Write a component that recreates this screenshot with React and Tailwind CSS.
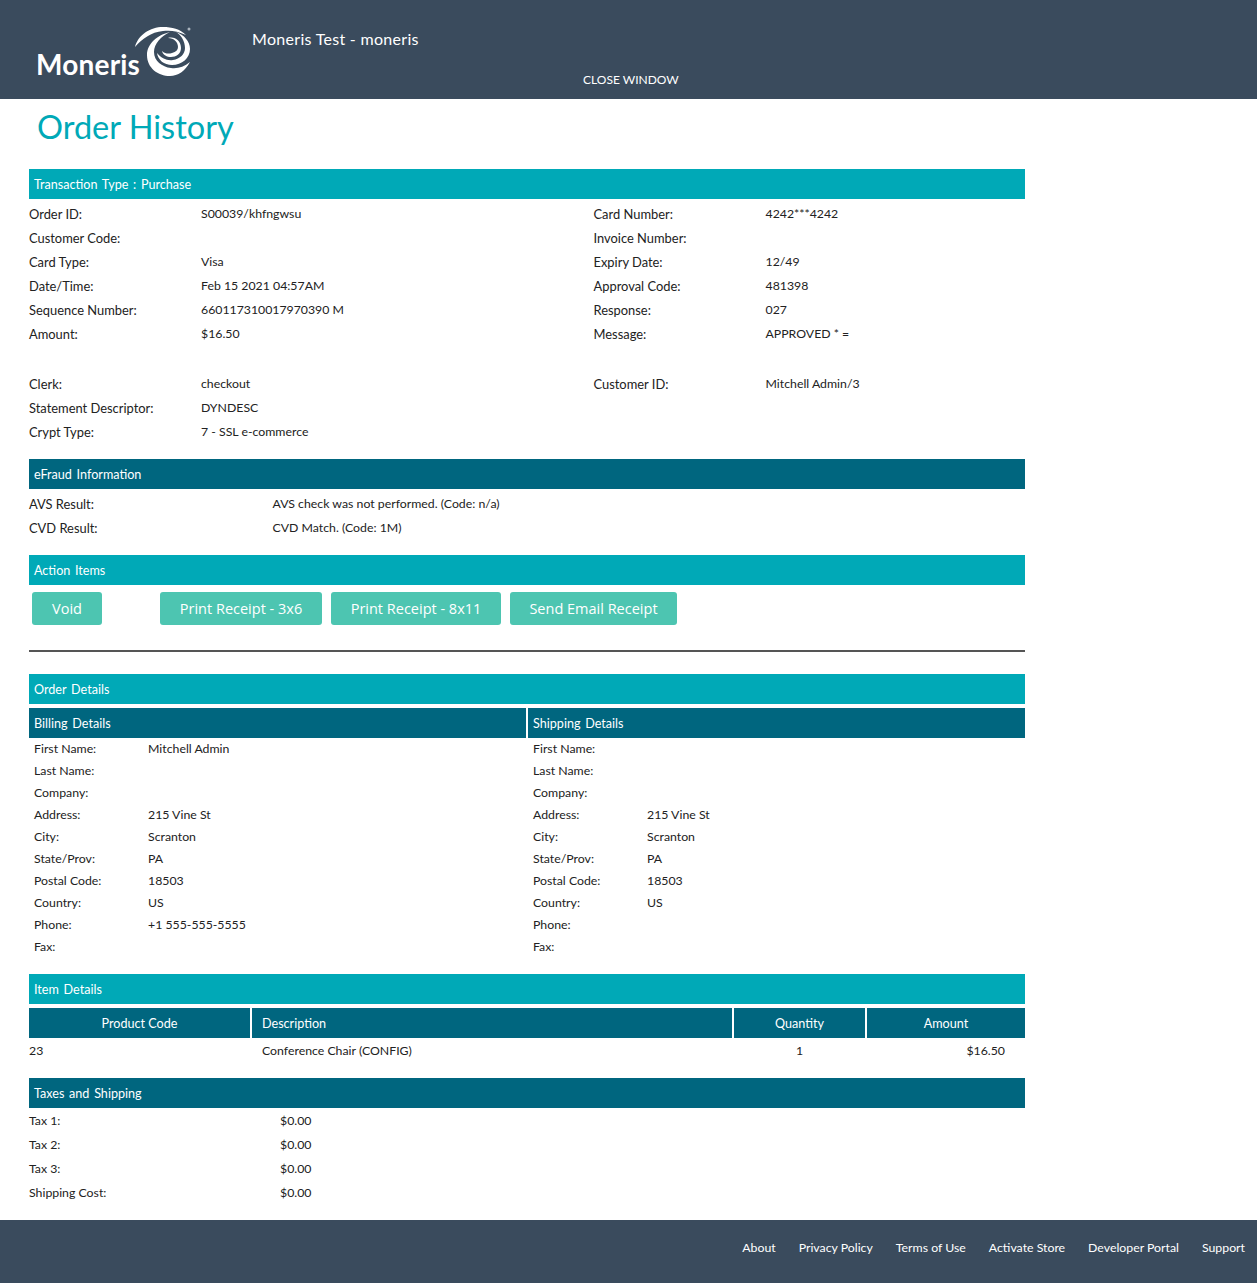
const SANS = "font-['Lato','Open_Sans',sans-serif]";

const mainRows = [
  ['Order ID:', 'S00039/khfngwsu', 'Card Number:', '4242***4242'],
  ['Customer Code:', '', 'Invoice Number:', ''],
  ['Card Type:', 'Visa', 'Expiry Date:', '12/49'],
  ['Date/Time:', 'Feb 15 2021 04:57AM', 'Approval Code:', '481398'],
  ['Sequence Number:', '660117310017970390 M', 'Response:', '027'],
  ['Amount:', '$16.50', 'Message:', 'APPROVED * ='],
];

const extraRows = [
  ['Clerk:', 'checkout', 'Customer ID:', 'Mitchell Admin/3'],
  ['Statement Descriptor:', 'DYNDESC', '', ''],
  ['Crypt Type:', '7 - SSL e-commerce', '', ''],
];

const billing = [
  ['First Name:', 'Mitchell Admin'],
  ['Last Name:', ''],
  ['Company:', ''],
  ['Address:', '215 Vine St'],
  ['City:', 'Scranton'],
  ['State/Prov:', 'PA'],
  ['Postal Code:', '18503'],
  ['Country:', 'US'],
  ['Phone:', '+1 555-555-5555'],
  ['Fax:', ''],
];

const shipping = [
  ['First Name:', ''],
  ['Last Name:', ''],
  ['Company:', ''],
  ['Address:', '215 Vine St'],
  ['City:', 'Scranton'],
  ['State/Prov:', 'PA'],
  ['Postal Code:', '18503'],
  ['Country:', 'US'],
  ['Phone:', ''],
  ['Fax:', ''],
];

const taxes = ['Tax 1:', 'Tax 2:', 'Tax 3:', 'Shipping Cost:'];
const footerLinks = ['About', 'Privacy Policy', 'Terms of Use', 'Activate Store', 'Developer Portal', 'Support'];

function Bar({ dark, children, className = '' }) {
  return (
    <div className={`h-[30px] flex items-center pt-[2px] px-[5px] text-white text-[12.6px] [word-spacing:1.5px] ${dark ? 'bg-[#00667f]' : 'bg-[#00a9b7]'} ${className}`}>
      {children}
    </div>
  );
}

function Row({ r }) {
  return (
    <div className="h-[24px] flex items-center pt-[1px]">
      <div className="w-[172px] text-[12.9px]">{r[0]}</div>
      <div className="w-[392.5px]">{r[1]}</div>
      <div className="w-[172px] text-[12.9px]">{r[2]}</div>
      <div>{r[3]}</div>
    </div>
  );
}

function Logo() {
  return (
    <div className="flex items-end h-[56px]">
      <span className="w-[94px] whitespace-nowrap text-white text-[28px] leading-none font-bold tracking-[0.2px] font-['Lato',sans-serif] mb-[2px]">Moneris</span>
      <svg viewBox="0 0 66 62" className="w-[66px] h-[62px] shrink-0 -mb-[2px]" fill="#fff">
        <path d="M5 27C8 15 20 7 33 7c9 0 17 2 23 8-8-4-16-5-23-4C21 12 12 19 5 27z" />
        <path d="M40 12C27 15 17 24 17 35c0 13 11 21 23 21 8 0 15-5 20-14-6 5-13 7-19 6-9-1-17-7-17-16 0-8 7-16 16-20z" />
        <path d="M46 12c8 3 14 9 14 17 0 9-8 16-18 16-8 0-14-5-15-12 4 5 10 8 16 7 7-1 12-6 12-12 0-7-4-13-9-16z" />
        <path d="M38 18c7-2 13 3 13 10 0 6-5 9-10 9-4 0-8-2-9-6 3 3 7 3 10 2 4-1 6-3 6-6 0-5-4-9-10-9z" />
        <circle cx="59" cy="9" r="1.5" fill="#aab4be" />
      </svg>
    </div>
  );
}

export default function App() {
  return (
    <div className={`min-h-[1283px] bg-white text-[12.3px] text-[#222] flex flex-col ${SANS}`}>
      {/* Header */}
      <div className="h-[99px] bg-[#3a4b5d] text-white flex pl-[36px]">
        <div className="pt-[24px] w-[160px]">
          <Logo />
        </div>
        <div className="ml-[56px] w-[520px]">
          <div className="mt-[28px] text-[16px] leading-[22px] tracking-[0.3px]">Moneris Test - moneris</div>
          <div className="mt-[20px] ml-[331px] text-[12px] leading-[20px]">CLOSE WINDOW</div>
        </div>
      </div>

      <div className="ml-[29px] w-[996px]">
        <h1 className="ml-[8px] mt-[7px] mb-[21px] text-[32.5px] leading-[42px] text-[#00a9b7]">Order History</h1>

        <Bar>Transaction Type : Purchase</Bar>
        <div className="pt-[3px]">
          {mainRows.map((r, i) => (
            <Row key={i} r={r} />
          ))}
          <div className="h-[26px]"></div>
          {extraRows.map((r, i) => (
            <Row key={i} r={r} />
          ))}
        </div>

        <Bar dark className="mt-[15px]">eFraud Information</Bar>
        <div className="pt-[3px]">
          <div className="h-[24px] flex items-center pt-[1px]">
            <div className="w-[243.5px] text-[12.9px]">AVS Result:</div>
            <div>AVS check was not performed. (Code: n/a)</div>
          </div>
          <div className="h-[24px] flex items-center pt-[1px]">
            <div className="w-[243.5px] text-[12.9px]">CVD Result:</div>
            <div>CVD Match. (Code: 1M)</div>
          </div>
        </div>

        <Bar className="mt-[15px]">Action Items</Bar>
        <div className="flex mt-[7px] pl-[3px] font-['Open_Sans',sans-serif] text-[14.5px] text-white">
          <button className="h-[33px] w-[70px] rounded-[3px] bg-[#4dc5b1]">Void</button>
          <button className="h-[33px] w-[162px] ml-[58px] rounded-[3px] bg-[#4dc5b1]">Print Receipt - 3x6</button>
          <button className="h-[33px] w-[170px] ml-[9px] rounded-[3px] bg-[#4dc5b1]">Print Receipt - 8x11</button>
          <button className="h-[33px] w-[167px] ml-[9px] rounded-[3px] bg-[#4dc5b1]">Send Email Receipt</button>
        </div>
        <div className="h-[2px] bg-[#555] mt-[25px] mb-[22px]"></div>

        <Bar>Order Details</Bar>
        <div className="grid grid-cols-2 gap-x-[2px] mt-[4px]">
          {[['Billing Details', billing], ['Shipping Details', shipping]].map(([title, rows]) => (
            <div key={title}>
              <Bar dark>{title}</Bar>
              <div className="pb-[5px]">
                {rows.map((r) => (
                  <div key={r[0]} className="h-[22px] flex items-center pt-[1px] pl-[5px]">
                    <div className="w-[114px]">{r[0]}</div>
                    <div>{r[1]}</div>
                  </div>
                ))}
              </div>
            </div>
          ))}
        </div>

        <Bar className="mt-[11px]">Item Details</Bar>
        <div className="flex gap-x-[2px] mt-[4px] text-white text-[12.6px]">
          <div className="h-[30px] w-[221px] pt-[2px] bg-[#00667f] flex items-center justify-center">Product Code</div>
          <div className="h-[30px] w-[480px] pt-[2px] bg-[#00667f] flex items-center pl-[10px]">Description</div>
          <div className="h-[30px] w-[131px] pt-[2px] bg-[#00667f] flex items-center justify-center">Quantity</div>
          <div className="h-[30px] w-[158px] pt-[2px] bg-[#00667f] flex items-center justify-center">Amount</div>
        </div>
        <div className="flex h-[26px] pt-[1px] items-center">
          <div className="w-[233px]">23</div>
          <div className="w-[472px]">Conference Chair (CONFIG)</div>
          <div className="w-[131px] text-center">1</div>
          <div className="w-[140px] text-right">$16.50</div>
        </div>

        <Bar dark className="mt-[14px]">Taxes and Shipping</Bar>
        <div className="pt-[1px] pb-[15px]">
          {taxes.map((t) => (
            <div key={t} className="h-[24px] flex items-center pt-[1px]">
              <div className="w-[251px]">{t}</div>
              <div>$0.00</div>
            </div>
          ))}
        </div>
      </div>

      {/* Footer */}
      <div className="h-[63px] bg-[#3a4b5d] text-white flex items-center justify-end gap-x-[23px] pr-[12px] pb-[7px] mt-auto">
        {footerLinks.map((l) => (
          <span key={l}>{l}</span>
        ))}
      </div>
    </div>
  );
}
